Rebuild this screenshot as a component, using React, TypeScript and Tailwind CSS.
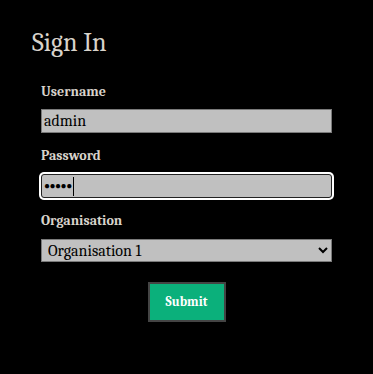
import { useState } from 'react';

const SERIF = "font-['Cambria','Liberation_Serif','DejaVu_Serif',serif]";

export default function App() {
  const [username, setUsername] = useState('admin');
  const [org, setOrg] = useState('1');

  return (
    <div className={`min-h-screen w-full bg-black ${SERIF}`}>
      <div className="px-8 pt-[27px]">
        <h1 className="text-[26px] leading-8 text-[#d8d3cb]">Sign In</h1>

        <form className="ml-[9px] mt-[21px] w-[291px]" onSubmit={(e) => e.preventDefault()}>
          {/* username */}
          <label className="block pt-[2px] text-[14px] leading-5 font-bold text-[#d8d3cb] mb-[7px]">Username</label>
          <input
            value={username}
            onChange={(e) => setUsername(e.target.value)}
            className="block w-full h-6 px-[2px] bg-[#c0c0c0] border border-[#7a7a7a] text-[16px] text-black outline-none"
          />

          {/* password (focused) */}
          <label className="block mt-[11px] pt-[2px] text-[14px] leading-5 font-bold text-[#d8d3cb] mb-[8px]">Password</label>
          <div className="flex items-center w-full h-6 px-[2px] bg-[#c0c0c0] border border-[#222] rounded-[3px] ring-2 ring-white">
            <span className="text-[10px] tracking-[-0.5px] text-black leading-none">●●●●●</span>
            <span className="ml-[1px] w-px h-[19px] bg-black" />
          </div>

          {/* organisation */}
          <label className="block mt-[11px] pt-[2px] text-[14px] leading-5 font-bold text-[#d8d3cb] mb-[8px]">Organisation</label>
          <select
            value={org}
            onChange={(e) => setOrg(e.target.value)}
            className="block w-full h-[23px] bg-[#c0c0c0] border border-[#7a7a7a] text-[16px] text-black px-[2px] outline-none"
          >
            <option value="1">Organisation 1</option>
            <option value="2">Organisation 2</option>
          </select>

          <div className="flex justify-center mt-[20px]">
            <button
              type="submit"
              className="w-[78px] h-10 bg-[#0bb07b] border-2 border-[#444] text-white text-[13px] font-bold"
            >
              Submit
            </button>
          </div>
        </form>
      </div>
    </div>
  );
}
